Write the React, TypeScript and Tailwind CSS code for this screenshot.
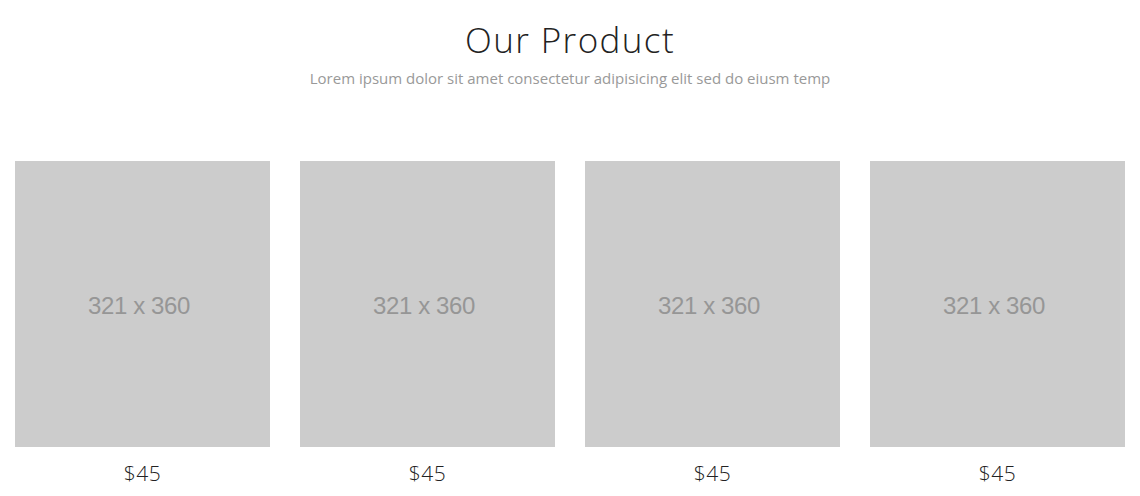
const products = [
  { id: 1, price: "$45" },
  { id: 2, price: "$45" },
  { id: 3, price: "$45" },
  { id: 4, price: "$45" },
];

function Placeholder() {
  return (
    <div className="h-[286px] w-full bg-[#cccccc] flex items-center justify-center pr-[7px] pt-[4px]">
      <span className="text-[24px] text-[#969696] font-['Liberation_Sans',Arial,sans-serif] tracking-[-0.4px]">
        321 x 360
      </span>
    </div>
  );
}

export default function App() {
  return (
    <div className="w-[1140px] h-[496px] bg-white overflow-hidden">
      <div className="pt-[20px] text-center">
        <h2 className="text-[35px] leading-[40px] font-light text-[#222] tracking-[1.4px] font-['Open_Sans',sans-serif]">
          Our Product
        </h2>
        <p className="mt-[8px] text-[15px] leading-[20px] text-[#999] font-['Open_Sans',sans-serif]">
          Lorem ipsum dolor sit amet consectetur adipisicing elit sed do eiusm temp
        </p>
      </div>
      <div className="mt-[73px] grid grid-cols-4">
        {products.map((p) => (
          <div key={p.id} className="px-[15px]">
            <Placeholder />
            <div className="mt-[14px] text-center text-[21px] leading-[24px] text-[#222] font-['Open_Sans',sans-serif] font-light tracking-[0.5px]">
              {p.price}
            </div>
          </div>
        ))}
      </div>
    </div>
  );
}
